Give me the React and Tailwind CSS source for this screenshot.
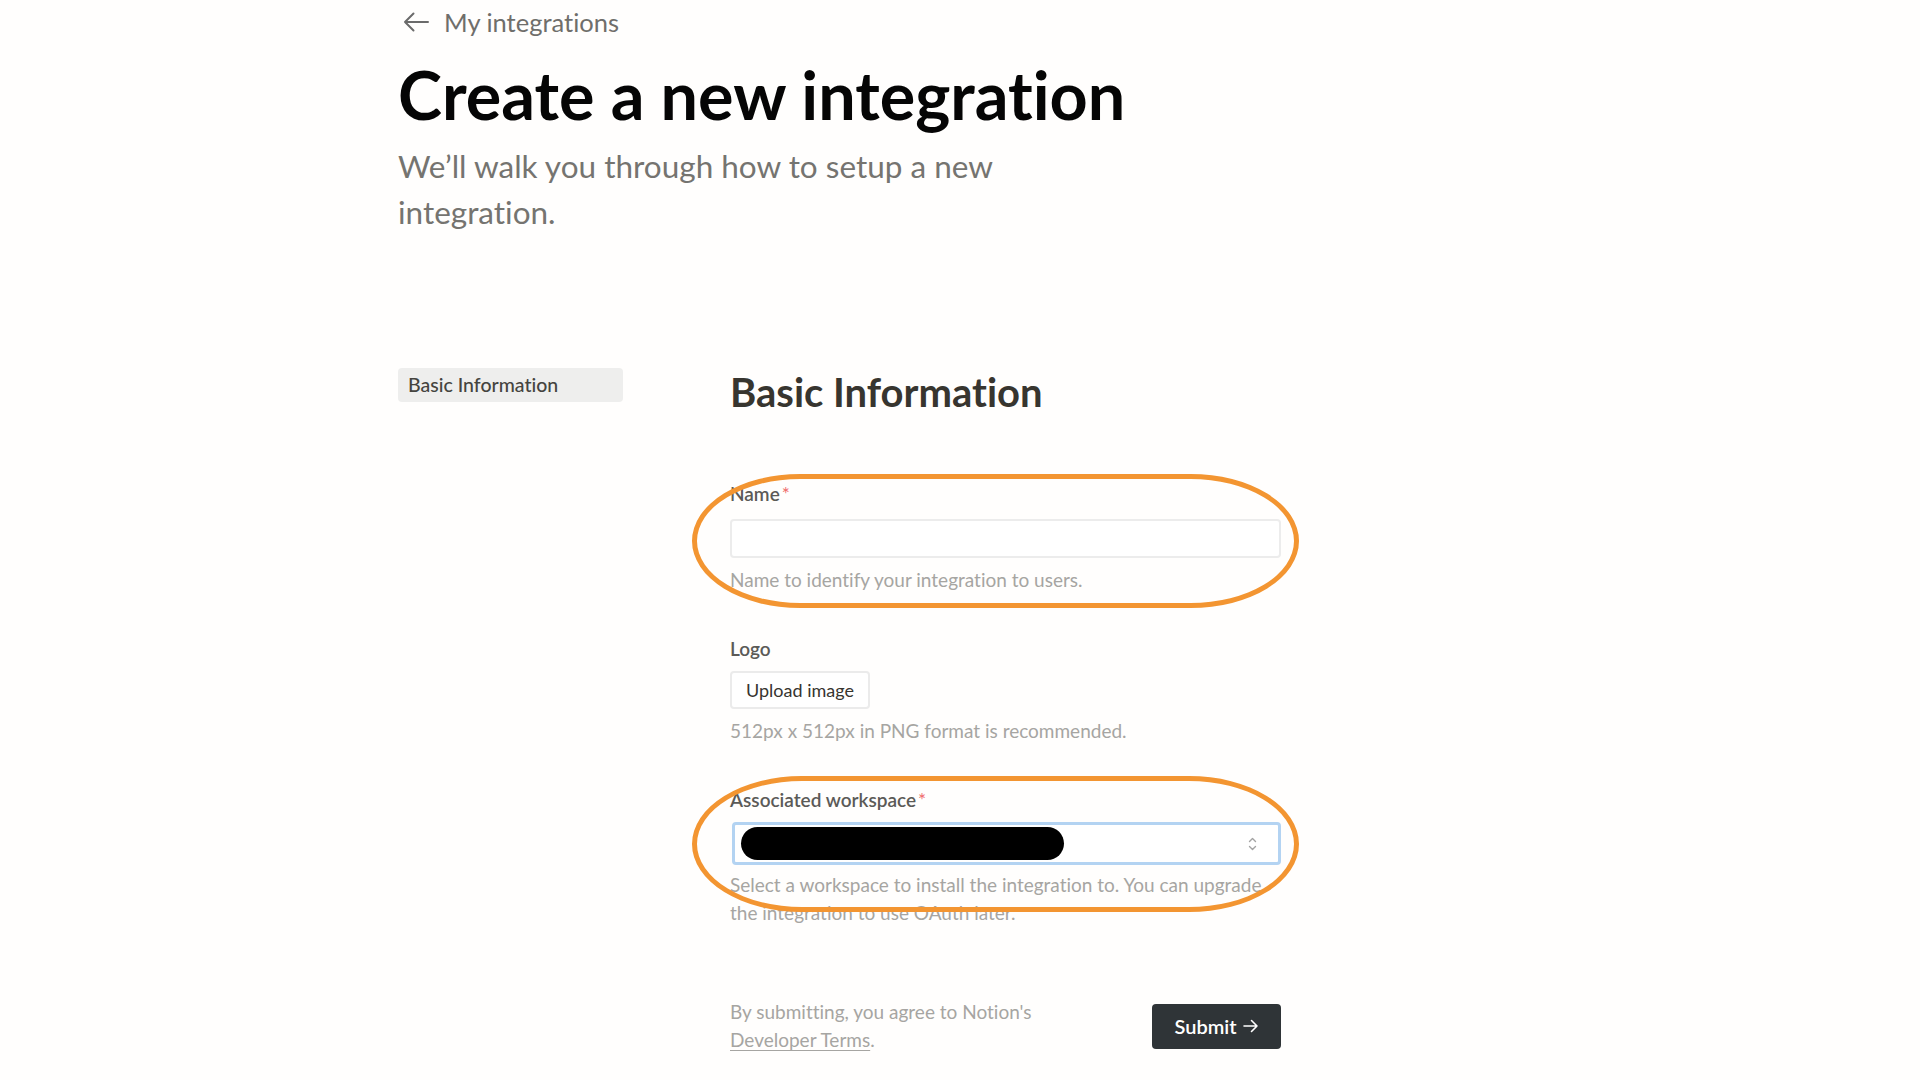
import React from 'react';

const Highlight = ({ className }) => (
  <div
    className={`pointer-events-none absolute left-[-38px] w-[607px] rounded-[110px/68px] border-[5px] border-[#f39531] z-10 ${className}`}
  />
);

const Label = ({ children, required }) => (
  <div className="text-[19px] leading-[28px] font-semibold text-[#5b5a57]">
    {children}
    {required && <span className="ml-[2px] text-[#ef6b6b] font-normal">*</span>}
  </div>
);

const Help = ({ children, className = '' }) => (
  <p className={`text-[19px] leading-[26px] text-[#a6a5a2] ${className}`}>{children}</p>
);

const App = () => {
  return (
    <div className="min-h-screen bg-[#fffefd] font-['Lato',sans-serif] [font-variant-ligatures:none] pl-[398px]">
      <div className="w-[884px]">
        <a className="flex items-center gap-[15px] h-[44px] text-[25.5px] text-[#6f6e6b] cursor-pointer">
          <svg width="26" height="20" viewBox="0 0 26 20" fill="none" className="ml-[5px]">
            <path d="M25 10H2M10.5 1.5 2 10l8.5 8.5" stroke="#6b6b6b" strokeWidth="2" strokeLinecap="round" strokeLinejoin="round" />
          </svg>
          My integrations
        </a>

        <h1 className="mt-[11px] text-[66.5px] leading-[79px] font-bold text-[#050505]">
          Create a new integration
        </h1>
        <p className="mt-[9px] max-w-[640px] text-[31.5px] leading-[46px] text-[#757470]">
          We’ll walk you through how to setup a new integration.
        </p>

        <div className="mt-[133px] flex">
          <aside className="w-[225px] shrink-0">
            <div className="h-[34px] rounded-[4px] bg-[#eeeeed] px-[10px] flex items-center text-[19.5px] font-medium text-[#45443f]">
              Basic Information
            </div>
          </aside>

          <main className="ml-[107px] w-[551px]">
            <h2 className="text-[40px] leading-[48px] font-bold text-[#37352f]">Basic Information</h2>

            <div className="relative mt-[64px]">
              <Highlight className="top-[-6px] h-[134px]" />
              <Label required>Name</Label>
              <input
                type="text"
                className="mt-[11px] block w-full h-[39px] rounded-[4px] border-2 border-[#ececec] bg-white px-3 outline-none"
              />
              <Help className="mt-[9px]">Name to identify your integration to users.</Help>
            </div>

            <div className="mt-[42px]">
              <Label>Logo</Label>
              <button className="mt-[8px] h-[38px] px-[14px] rounded-[4px] border-2 border-[#ebebeb] bg-white text-[18px] text-[#37352f]">
                Upload image
              </button>
              <Help className="mt-[9px] text-[18.7px]">512px x 512px in PNG format is recommended.</Help>
            </div>

            <div className="relative mt-[42px]">
              <Highlight className="top-[-10px] h-[136px]" />
              <Label required>Associated workspace</Label>
              <div className="mt-[8px] ml-[2px] h-[43px] rounded-[4px] border-[3px] border-[#b3d3f2] bg-white flex items-center pl-[6px] pr-[21px]">
                <div className="h-[33px] w-[323px] rounded-full bg-black" />
                <svg width="9" height="16" viewBox="0 0 9 16" fill="none" className="ml-auto">
                  <path d="M1.5 5.5 4.5 2.5l3 3M1.5 10.5l3 3 3-3" stroke="#a3a3a3" strokeWidth="1.4" strokeLinecap="round" strokeLinejoin="round" />
                </svg>
              </div>
              <Help className="mt-[6px] leading-[28px]">
                Select a workspace to install the integration to. You can upgrade the integration to use OAuth later.
              </Help>
            </div>

            <div className="mt-[71px] flex items-center justify-between">
              <p className="w-[340px] text-[19px] leading-[28px] text-[#a6a5a2]">
                By submitting, you agree to Notion's{' '}
                <span className="underline underline-offset-[3px]">Developer Terms</span>.
              </p>
              <button className="h-[45px] w-[129px] rounded-[4px] bg-[#2f3437] text-white text-[20px] font-semibold flex items-center justify-center gap-[6px]">
                Submit
                <svg width="16" height="14" viewBox="0 0 16 14" fill="none">
                  <path d="M1 7h13M8.5 1.5 14 7l-5.5 5.5" stroke="white" strokeWidth="1.6" strokeLinecap="round" strokeLinejoin="round" />
                </svg>
              </button>
            </div>
          </main>
        </div>
      </div>
    </div>
  );
};

export default App;
